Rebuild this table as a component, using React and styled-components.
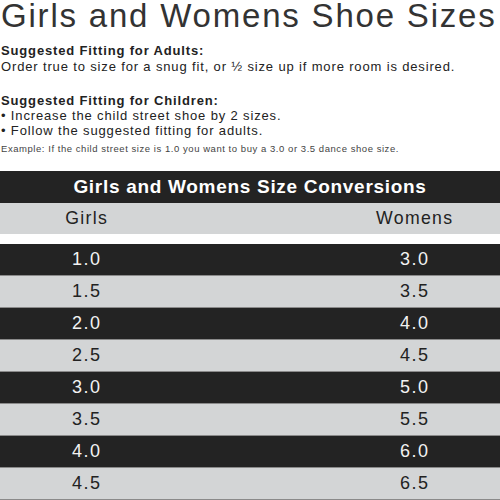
import styled, { createGlobalStyle } from "styled-components"

const GlobalStyle = createGlobalStyle`
  body {
    margin: 0;
    background: #ffffff;
    font-family: "Liberation Sans", Arial, sans-serif;
  }
`;

const sizes = [
  ["1.0", "3.0"],
  ["1.5", "3.5"],
  ["2.0", "4.0"],
  ["2.5", "4.5"],
  ["3.0", "5.0"],
  ["3.5", "5.5"],
  ["4.0", "6.0"],
  ["4.5", "6.5"],
]

const App = () => {
  return (
    <Page>
      <GlobalStyle />
      <Title>Girls and Womens Shoe Sizes</Title>
      <Section>
        <Heading>Suggested Fitting for Adults:</Heading>
        <Line>Order true to size for a snug fit, or ½ size up if more room is desired.</Line>
      </Section>
      <Section spaced>
        <Heading>Suggested Fitting for Children:</Heading>
        <Line>• Increase the child street shoe by 2 sizes.</Line>
        <Line>• Follow the suggested fitting for adults.</Line>
      </Section>
      <Note>Example: If the child street size is 1.0 you want to buy a 3.0 or 3.5 dance shoe size.</Note>

      <Table>
        <Banner>Girls and Womens Size Conversions</Banner>
        <HeadRow>
          <Cell>Girls</Cell>
          <Cell>Womens</Cell>
        </HeadRow>
        <Rows>
          {sizes.map(([girls, womens], i) => (
            <Row key={girls} dark={i % 2 === 0}>
              <Cell>{girls}</Cell>
              <Cell>{womens}</Cell>
            </Row>
          ))}
        </Rows>
      </Table>
    </Page>
  )
}

export default App

const Page = styled.div`
  width: 500px;
  color: #222;
`;

const Title = styled.h1`
  margin: 0;
  padding: 0 0 0 1px;
  height: 31px;
  font-size: 33px;
  line-height: 31px;
  font-weight: normal;
  letter-spacing: 1.8px;
  color: #333;
  white-space: nowrap;
`;

const Section = styled.div`
  margin-top: ${props => (props.spaced ? "18.7px" : "12.4px")};
  padding-left: 1px;
  font-size: 13px;
  line-height: 15.3px;
  letter-spacing: 0.85px;
`;

const Heading = styled.div`
  font-weight: bold;
`;

const Line = styled.div`
  white-space: nowrap;
`;

const Note = styled.div`
  margin-top: 4.7px;
  padding-left: 1px;
  font-size: 9.5px;
  line-height: 12px;
  letter-spacing: 0.55px;
  color: #444;
  white-space: nowrap;
`;

const Table = styled.div`
  margin-top: 15.6px;
  width: 500px;
`;

const Banner = styled.div`
  height: 32px;
  display: flex;
  align-items: center;
  justify-content: center;
  background: #232323;
  color: #fff;
  font-size: 19px;
  font-weight: bold;
  letter-spacing: 0.7px;
`;

const HeadRow = styled.div`
  height: 31px;
  display: grid;
  grid-template-columns: 172px 1fr 172px;
  align-items: center;
  background: #d3d5d6;
  color: #222;
  font-size: 17.7px;
  letter-spacing: 1.3px;

  & > :last-child {
    grid-column: 3;
  }
`;

const Rows = styled.div`
  margin-top: 10px;
`;

const Row = styled.div`
  height: 32px;
  display: grid;
  grid-template-columns: 172px 1fr 172px;
  align-items: center;
  box-sizing: border-box;
  border-bottom: 1px solid #8a8a8a;
  background: ${props => (props.dark ? "#232323" : "#d3d5d6")};
  color: ${props => (props.dark ? "#f2f2f2" : "#222")};
  font-size: 18px;
  letter-spacing: 1.5px;

  & > :last-child {
    grid-column: 3;
  }
`;

const Cell = styled.div`
  text-align: center;
  padding-left: 1.5px;
`;
